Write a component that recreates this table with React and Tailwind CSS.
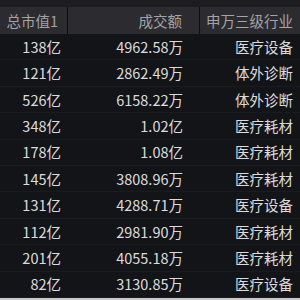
const rows = [
  ["138亿", "4962.58万", "医疗设备"],
  ["121亿", "2862.49万", "体外诊断"],
  ["526亿", "6158.22万", "体外诊断"],
  ["348亿", "1.02亿", "医疗耗材"],
  ["178亿", "1.08亿", "医疗耗材"],
  ["145亿", "3808.96万", "医疗耗材"],
  ["131亿", "4288.71万", "医疗设备"],
  ["112亿", "2981.90万", "医疗耗材"],
  ["201亿", "4055.18万", "医疗耗材"],
  ["82亿", "3130.85万", "医疗设备"],
];

const App = () => {
  return (
    <div
      className="w-[300px] h-[300px] overflow-hidden bg-[#131418] flex flex-col text-[14.5px]"
      style={{ fontFamily: '"Microsoft YaHei", "Noto Sans CJK SC", sans-serif' }}
    >
      <div className="h-[7px] bg-[#1d1d21]" />
      <div className="h-[27px] flex bg-[#2b2b30] text-[#a3a3a8]">
        <div className="w-[68px] flex items-center justify-end pr-[9px] border-r border-[#0e0e10]">总市值1</div>
        <div className="w-[132px] flex items-center justify-end pr-[17px] border-r border-[#0e0e10]">成交额</div>
        <div className="flex-1 flex items-center justify-end pr-[7px]">申万三级行业</div>
      </div>
      <div className="flex flex-col">
        {rows.map((r, i) => (
          <div key={i} className="h-[26.4px] flex items-center text-[#dcdcdc] border-b border-[#1a1b20]">
            <div className="w-[68px] text-right pr-[7px]">{r[0]}</div>
            <div className="w-[132px] text-right pr-[17px]">{r[1]}</div>
            <div className="flex-1 text-right pr-[7px]">{r[2]}</div>
          </div>
        ))}
      </div>
      <div className="h-[2px] mt-auto bg-[#c8c8c8]" />
    </div>
  );
};

export default App;
